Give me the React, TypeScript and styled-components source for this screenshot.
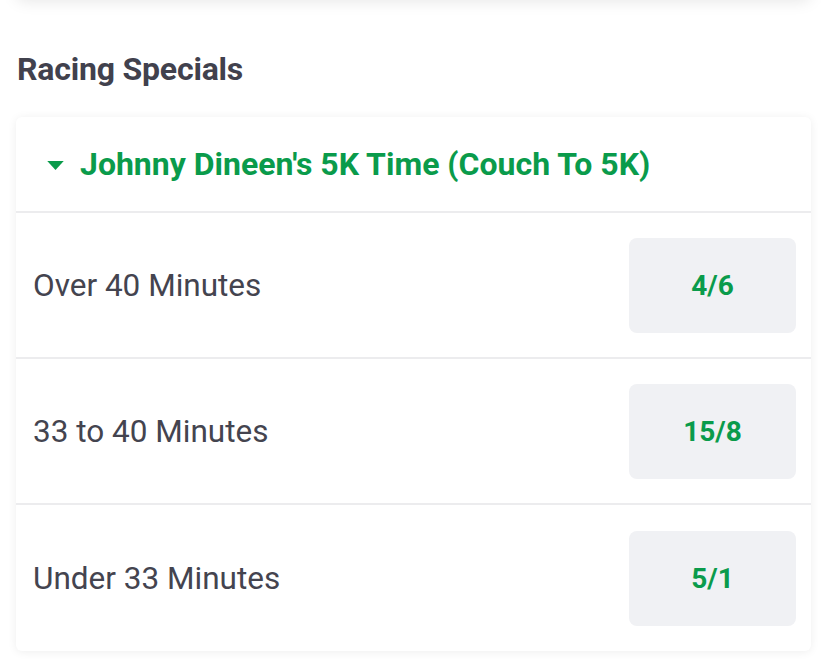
import styled, { createGlobalStyle } from 'styled-components';

const GlobalStyle = createGlobalStyle`
  html, body {
    margin: 0;
    padding: 0;
    background: #ffffff;
  }
  body {
    font-family: Roboto, "Liberation Sans", sans-serif;
    -webkit-font-smoothing: antialiased;
  }
`;

type Selection = {
  name: string
  odds: string
}

const selections: Selection[] = [
  { name: 'Over 40 Minutes', odds: '4/6' },
  { name: '33 to 40 Minutes', odds: '15/8' },
  { name: 'Under 33 Minutes', odds: '5/1' },
];

const App = () => {
  return (
    <Page>
      <GlobalStyle />
      <PrevCard />
      <SectionTitle>Racing Specials</SectionTitle>
      <Card>
        <MarketHeader>
          <Caret viewBox='0 0 20 12' width='19' height='11'>
            <path d='M1 1 L19 1 L10 11 Z' fill='#0a9b4b' />
          </Caret>
          <MarketName>Johnny Dineen's 5K Time (Couch To 5K)</MarketName>
        </MarketHeader>
        {selections.map((s) => (
          <Row key={s.name}>
            <RowLabel>{s.name}</RowLabel>
            <OddsButton>{s.odds}</OddsButton>
          </Row>
        ))}
      </Card>
    </Page>
  )
}

const Page = styled.div`
  width: 828px;
  height: 665px;
  overflow: hidden;
  padding: 0 17px 0 16px;
  box-sizing: border-box;
`;

const PrevCard = styled.div`
  height: 20px;
  margin-top: -22px;
  background: #fff;
  border-radius: 8px;
  box-shadow: 0 3px 16px rgba(0, 0, 0, 0.1);
`;

const SectionTitle = styled.h2`
  margin: 52px 0 0 1px;
  font-size: 32px;
  line-height: 38px;
  font-weight: 700;
  color: #41414d;
  letter-spacing: -0.2px;
`;

const Card = styled.div`
  margin-top: 29px;
  background: #fff;
  border-radius: 6px;
  box-shadow: 0 1px 10px rgba(0, 0, 0, 0.07);
  overflow: hidden;
`;

const MarketHeader = styled.div`
  height: 96px;
  box-sizing: border-box;
  display: flex;
  align-items: center;
  padding-left: 30px;
  gap: 15px;
  border-bottom: 2px solid #ececee;
`;

const Caret = styled.svg`
  flex-shrink: 0;
  margin-top: 2px;
`;

const MarketName = styled.span`
  font-size: 32px;
  font-weight: 700;
  color: #0a9b4b;
`;

const Row = styled.div`
  height: 146px;
  box-sizing: border-box;
  display: flex;
  align-items: center;
  justify-content: space-between;
  padding: 0 15px 0 17px;
  border-bottom: 2px solid #ececee;
  &:last-child {
    border-bottom: none;
  }
`;

const RowLabel = styled.span`
  font-size: 31.5px;
  color: #44444f;
`;

const OddsButton = styled.div`
  width: 167px;
  height: 95px;
  border-radius: 8px;
  background: #f0f1f4;
  display: flex;
  align-items: center;
  justify-content: center;
  font-size: 28px;
  font-weight: 700;
  color: #0a9b4b;
`;

export default App
